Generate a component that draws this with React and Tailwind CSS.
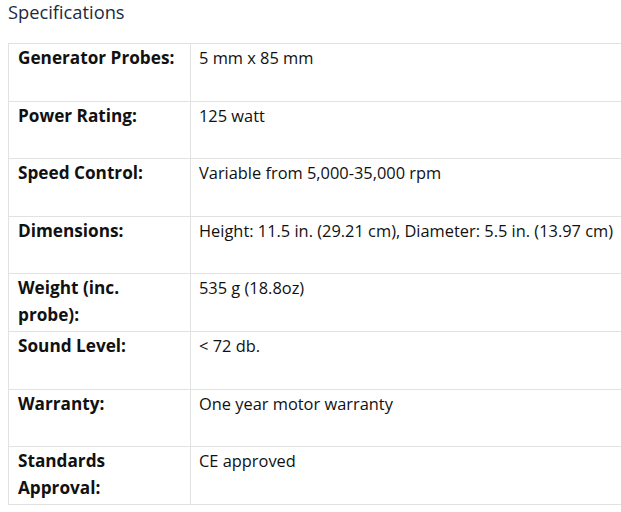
const rows = [
  ["Generator Probes:", "5 mm x 85 mm"],
  ["Power Rating:", "125 watt"],
  ["Speed Control:", "Variable from 5,000-35,000 rpm"],
  ["Dimensions:", "Height: 11.5 in. (29.21 cm), Diameter: 5.5 in. (13.97 cm)"],
  ["Weight (inc. probe):", "535 g (18.8oz)"],
  ["Sound Level:", "< 72 db."],
  ["Warranty:", "One year motor warranty"],
  ["Standards Approval:", "CE approved"],
];

export default function App() {
  return (
    <div
      className="w-[621px] h-[512px] overflow-hidden bg-white"
      style={{ fontFamily: '"Open Sans", "Noto Sans", sans-serif' }}
    >
      <h2 className="pl-[8px] pt-0 text-[18.3px] leading-[24px] text-[#1c2b3e] font-normal">
        Specifications
      </h2>
      <div className="ml-[8px] mt-[19px] w-[660px] border-t border-l border-[#e2e2e2]">
        {rows.map(([k, v]) => (
          <div key={k} className="flex h-[57.6px] border-b border-[#e2e2e2]">
            <div className="w-[182px] shrink-0 border-r border-[#e2e2e2] px-[9px] pt-0 text-[17.2px] leading-[27px] font-bold text-[#111]">
              {k}
            </div>
            <div className="flex-1 px-[8px] pt-0 text-[16.4px] leading-[27px] text-[#111] whitespace-nowrap">
              {v}
            </div>
          </div>
        ))}
      </div>
    </div>
  );
}
